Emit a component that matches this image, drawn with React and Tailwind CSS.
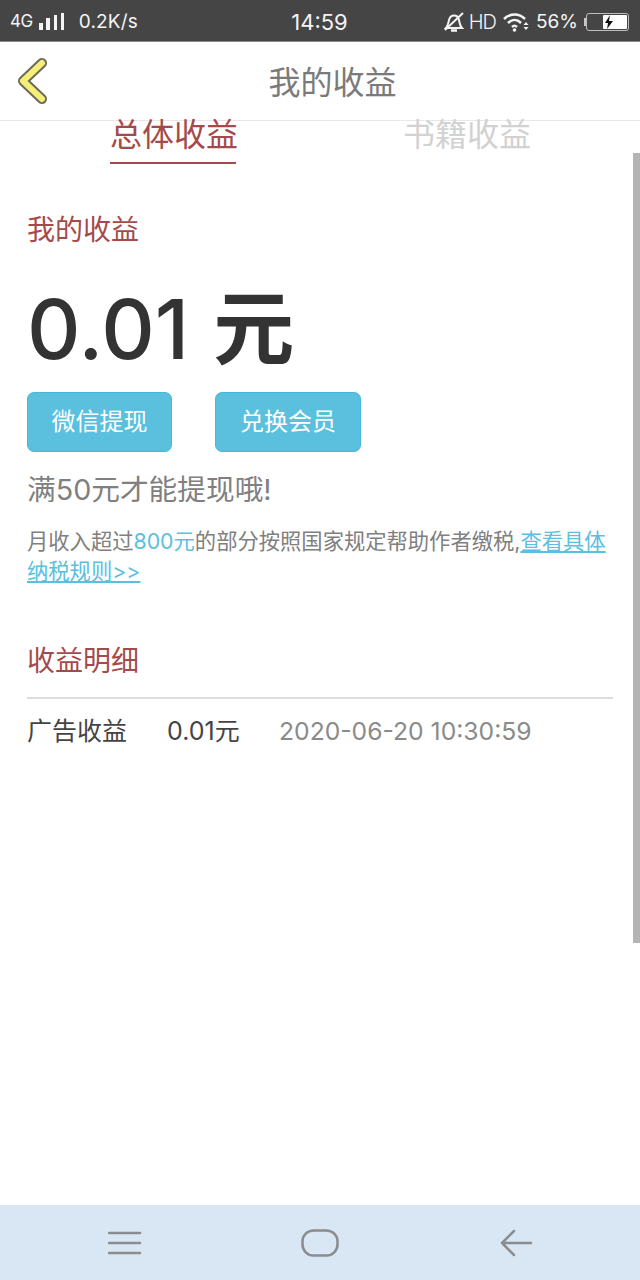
import React from 'react'

const base = "font-['Inter','Noto_Sans_CJK_SC',sans-serif]"

const StatusBar = () => (
    <div className="h-[42px] bg-[#454545] border-b border-[#8a8a8a] flex items-center justify-between pt-[3px] pl-[10px] pr-[11px] text-[#f4f4f4]">
        <div className="flex items-center w-[200px]">
            <span className="text-[17px] tracking-[-0.5px]">4G</span>
            <svg width="26" height="20" viewBox="0 0 26 20" className="ml-[6px]" fill="#f4f4f4">
                <rect x="0" y="11" width="4" height="7" />
                <rect x="7" y="6" width="4" height="12" />
                <rect x="15" y="3" width="3" height="15" />
                <rect x="22" y="1" width="3" height="17" />
            </svg>
            <span className="ml-[14px] text-[19px] tracking-[0.2px]">0.2K/s</span>
        </div>
        <span className="text-[22px]">14:59</span>
        <div className="flex items-center justify-end w-[200px]">
            <svg width="20" height="24" viewBox="0 0 20 24" fill="none" stroke="#f4f4f4" strokeWidth="2">
                <path d="M2 18c2-2 2-4 3-8 .8-3 3-4.500 5-4.500 3 0 4.500 2 5 4.500.5 3 1 6 3 8z" />
                <path d="M7 20.500h6" strokeWidth="2.500" />
                <path d="M1 20L19 3" />
            </svg>
            <span className="ml-[5px] text-[20px] font-light leading-none tracking-[-1px]">HD</span>
            <svg width="27" height="22" viewBox="0 0 27 22" className="ml-[7px]" fill="none" stroke="#f4f4f4" strokeWidth="2.500">
                <path d="M1 8c6-6 15-6 21 0" />
                <path d="M5 12c4-4 9-4 13 0" />
                <path d="M9 16c2-2 3-2 5 0" />
                <circle cx="11.500" cy="19" r="1.800" fill="#f4f4f4" stroke="none" />
                <path d="M23 11l2.500 3h-5zM23 19l2.500-3h-5z" fill="#f4f4f4" stroke="none" />
            </svg>
            <span className="ml-[6px] text-[19px]">56%</span>
            <div className="ml-[6px] flex items-center">
                <div className="w-[2px] h-[8px] bg-[#c8c8c8]" />
                <div className="relative w-[43px] h-[18px] border border-[#bdbdbd] rounded-[3px] flex justify-end p-[1px]">
                    <div className="w-[24px] bg-white rounded-[1px]" />
                    <svg width="10" height="14" viewBox="0 0 10 14" className="absolute left-[17px] top-[1px]" fill="#111">
                        <path d="M6 0L1 8h3l-1 6 6-8H5z" />
                    </svg>
                </div>
            </div>
        </div>
    </div>
)

const Header = () => (
    <div className="relative h-[79px] border-b border-[#e8e8e8] flex items-center justify-center pt-[3px] bg-white">
        <svg width="32" height="48" viewBox="0 0 32 48" className="absolute left-[17px] top-[15px]">
            <path d="M25 6L6 24l19 18" fill="none" stroke="#6b6b58" strokeWidth="10" strokeLinecap="round" strokeLinejoin="round" />
            <path d="M25 6L6 24l19 18" fill="none" stroke="#f5ee78" strokeWidth="6" strokeLinecap="round" strokeLinejoin="round" />
        </svg>
        <span className="ml-[25px] text-[32px] leading-none text-[#7a7a7a]">我的收益</span>
    </div>
)

const Tabs = () => (
    <div className="h-[43px] flex relative">
        <div className="w-[346px] flex justify-center">
            <div className="h-[43px] border-b-2 border-[#a54a4a] text-[32px] leading-[28px] text-[#a54a4a] w-[126px] whitespace-nowrap">总体收益</div>
        </div>
        <div className="ml-[57px] text-[32px] leading-[28px] text-[#d2d2d2] w-[126px] whitespace-nowrap">书籍收益</div>
    </div>
)

export default function App() {
    return (
        <div className={`relative w-[640px] h-[1280px] flex flex-col bg-white overflow-hidden ${base}`}>
            <StatusBar />
            <Header />
            <Tabs />
            <div className="flex-1 px-[27px]">
                <h2 className="mt-[50px] text-[28px] leading-[32px] text-[#a54a4a]">我的收益</h2>
                <div className="mt-[33px] flex items-start h-[100px] text-[83px] leading-[100px] text-[#333333] font-medium">
                    <span>0.01</span>
                    <span className="ml-[24px] text-[81px] leading-[100px] font-semibold">元</span>
                </div>
                <div className="mt-[13px] flex gap-[43px]">
                    <button type="button" className="w-[145px] h-[60px] rounded-[7px] bg-[#5bc0de] border border-[#46b8da] text-white text-[24px] leading-[56px]">微信提现</button>
                    <button type="button" className="w-[146px] h-[60px] rounded-[7px] bg-[#5bc0de] border border-[#46b8da] text-white text-[24px] leading-[56px]">兑换会员</button>
                </div>
                <p className="mt-[18px] text-[28.7px] leading-[40px] text-[#808080]">满50元才能提现哦!</p>
                <p className="mt-[16px] w-[586px] text-[21.3px] leading-[30px] text-[#808080]">
                    月收入超过<span className="text-[#5bc0de]">800元</span>的部分按照国家规定帮助作者缴税,<span className="text-[#5bc0de] underline">查看具体纳税规则&gt;&gt;</span>
                </p>
                <h2 className="mt-[57px] text-[28px] leading-[36px] text-[#a54a4a]">收益明细</h2>
                <div className="mt-[18px] w-[586px] border-t-2 border-[#dddddd] pt-[15px] flex items-center text-[25px] leading-[34px]">
                    <span className="w-[140px] text-[#444444]">广告收益</span>
                    <span className="w-[112px] text-[#444444]">0.01元</span>
                    <span className="text-[24.7px] text-[#8a8a8a]">2020-06-20 10:30:59</span>
                </div>
            </div>
            {/* page scrollbar */}
            <div className="absolute right-0 top-[153px] w-[7px] h-[790px] bg-[#b4b4b4]" />
            <div className="h-[75px] bg-[#d9e6f3] flex items-center relative">
                <svg width="34" height="24" viewBox="0 0 34 24" className="absolute left-[108px] top-[26px]" stroke="#8a8d90" strokeWidth="2.500" strokeLinecap="round">
                    <path d="M1 2h31M1 12h31M1 22h31" />
                </svg>
                <svg width="38" height="28" viewBox="0 0 38 28" className="absolute left-[301px] top-[24px]" fill="none" stroke="#8a8d90" strokeWidth="2.500">
                    <rect x="1.500" y="1.500" width="35" height="25" rx="11" />
                </svg>
                <svg width="34" height="28" viewBox="0 0 34 28" className="absolute left-[499px] top-[24px]" fill="none" stroke="#8a8d90" strokeWidth="2.500" strokeLinecap="round" strokeLinejoin="round">
                    <path d="M15 2L3 14l12 12M3 14h29" />
                </svg>
            </div>
        </div>
    )
}
